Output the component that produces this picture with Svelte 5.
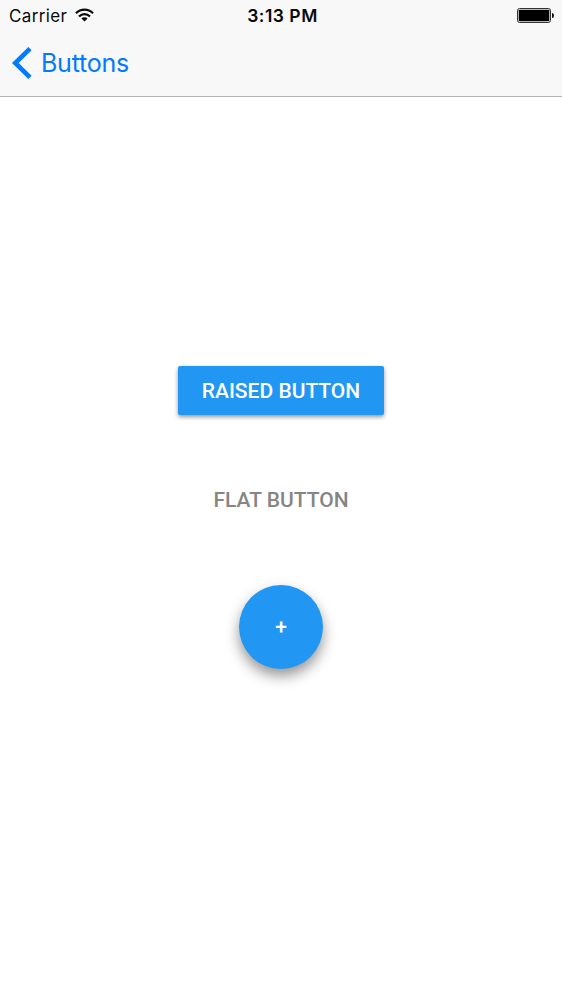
<script>
  const carrier = 'Carrier';
  const time = '3:13 PM';
</script>

<div class="screen">
  <header>
    <div class="status">
      <div class="carrier">
        <span class="carrier-name">{carrier}</span>
        <svg class="wifi" width="19" height="14" viewBox="0 0 19 14" aria-hidden="true">
          <g fill="none" stroke="#0a0a0a" stroke-width="2.300">
            <path d="M1 5.200C5.800 .5 13.200 .5 18 5.200" />
            <path d="M4 8.500C7.200 5.400 11.800 5.400 15 8.500" />
          </g>
          <path fill="#0a0a0a" d="M9.500 13.400 6.400 10.400C8 8.900 11 8.900 12.600 10.400Z" />
        </svg>
      </div>
      <time>{time}</time>
      <svg class="battery" width="38" height="16" viewBox="0 0 38 16" aria-hidden="true">
        <rect x=".5" y=".5" width="33" height="14" rx="2" fill="none" stroke="#333" />
        <rect x="1.700" y="1.700" width="30.600" height="11.600" rx=".6" fill="#000" />
        <path d="M35 5h.5q1.500.5 1.500 2.500T35.500 10H35z" fill="#111" />
      </svg>
    </div>
    <nav>
      <button class="back">
        <svg width="20" height="32" viewBox="0 0 20 32" aria-hidden="true">
          <path d="M18 1.600 3.300 16 18 30.400" fill="none" stroke="#007aff" stroke-width="4.600" />
        </svg>
        <span>Buttons</span>
      </button>
    </nav>
  </header>
  <main>
    <button class="raised"><span>RAISED BUTTON</span></button>
    <button class="flat"><span>FLAT BUTTON</span></button>
    <button class="fab" aria-label="Add"><span>+</span></button>
  </main>
</div>

<style>
  :global(body) { margin: 0; background: #fff; }
  button { border: 0; padding: 0; background: none; font: inherit; color: inherit; }
  .screen { height: 1000px; display: flex; flex-direction: column; background: #fff; overflow: hidden; }
  header { box-sizing: border-box; height: 97px; background: #f8f8f8; border-bottom: 1px solid #b2b2b2; font-family: Inter, sans-serif; flex: none; }
  .status { display: grid; grid-template-columns: 1fr auto 1fr; height: 31px; align-items: center; color: #0a0a0a; }
  .carrier { display: flex; align-items: center; gap: 8px; padding-left: 9px; font-size: 17px; line-height: 31px; letter-spacing: .35px; }
  .carrier-name { padding-top: 1px; line-height: 30px; }
  .wifi { margin-top: -1px; }
  time { padding: 1px 0 0 3px; font-size: 17.500px; font-weight: 600; letter-spacing: .5px; line-height: 30px; }
  .battery { justify-self: end; margin-right: 7px; }
  nav { height: 63px; display: flex; align-items: center; }
  .back { display: flex; align-items: center; gap: 9px; margin-left: 12px; color: #007aff; font-size: 25px; letter-spacing: -.25px; line-height: 32px; }
  main { flex: 1; display: flex; flex-direction: column; align-items: center; padding-top: 269px; font: 500 21px/24px Roboto, sans-serif; }
  .raised { width: 206px; height: 49px; border-radius: 2px; background: #2196f3; color: #fff; box-shadow: 0 2px 4px rgba(0, 0, 0, .42); }
  .flat { height: 49px; margin-top: 60px; color: #858585; }
  .fab { width: 84px; height: 84px; margin-top: 61px; border-radius: 50%; background: #2196f3; color: #fff; box-shadow: 0 7px 14px rgba(0, 0, 0, .42); }
</style>
